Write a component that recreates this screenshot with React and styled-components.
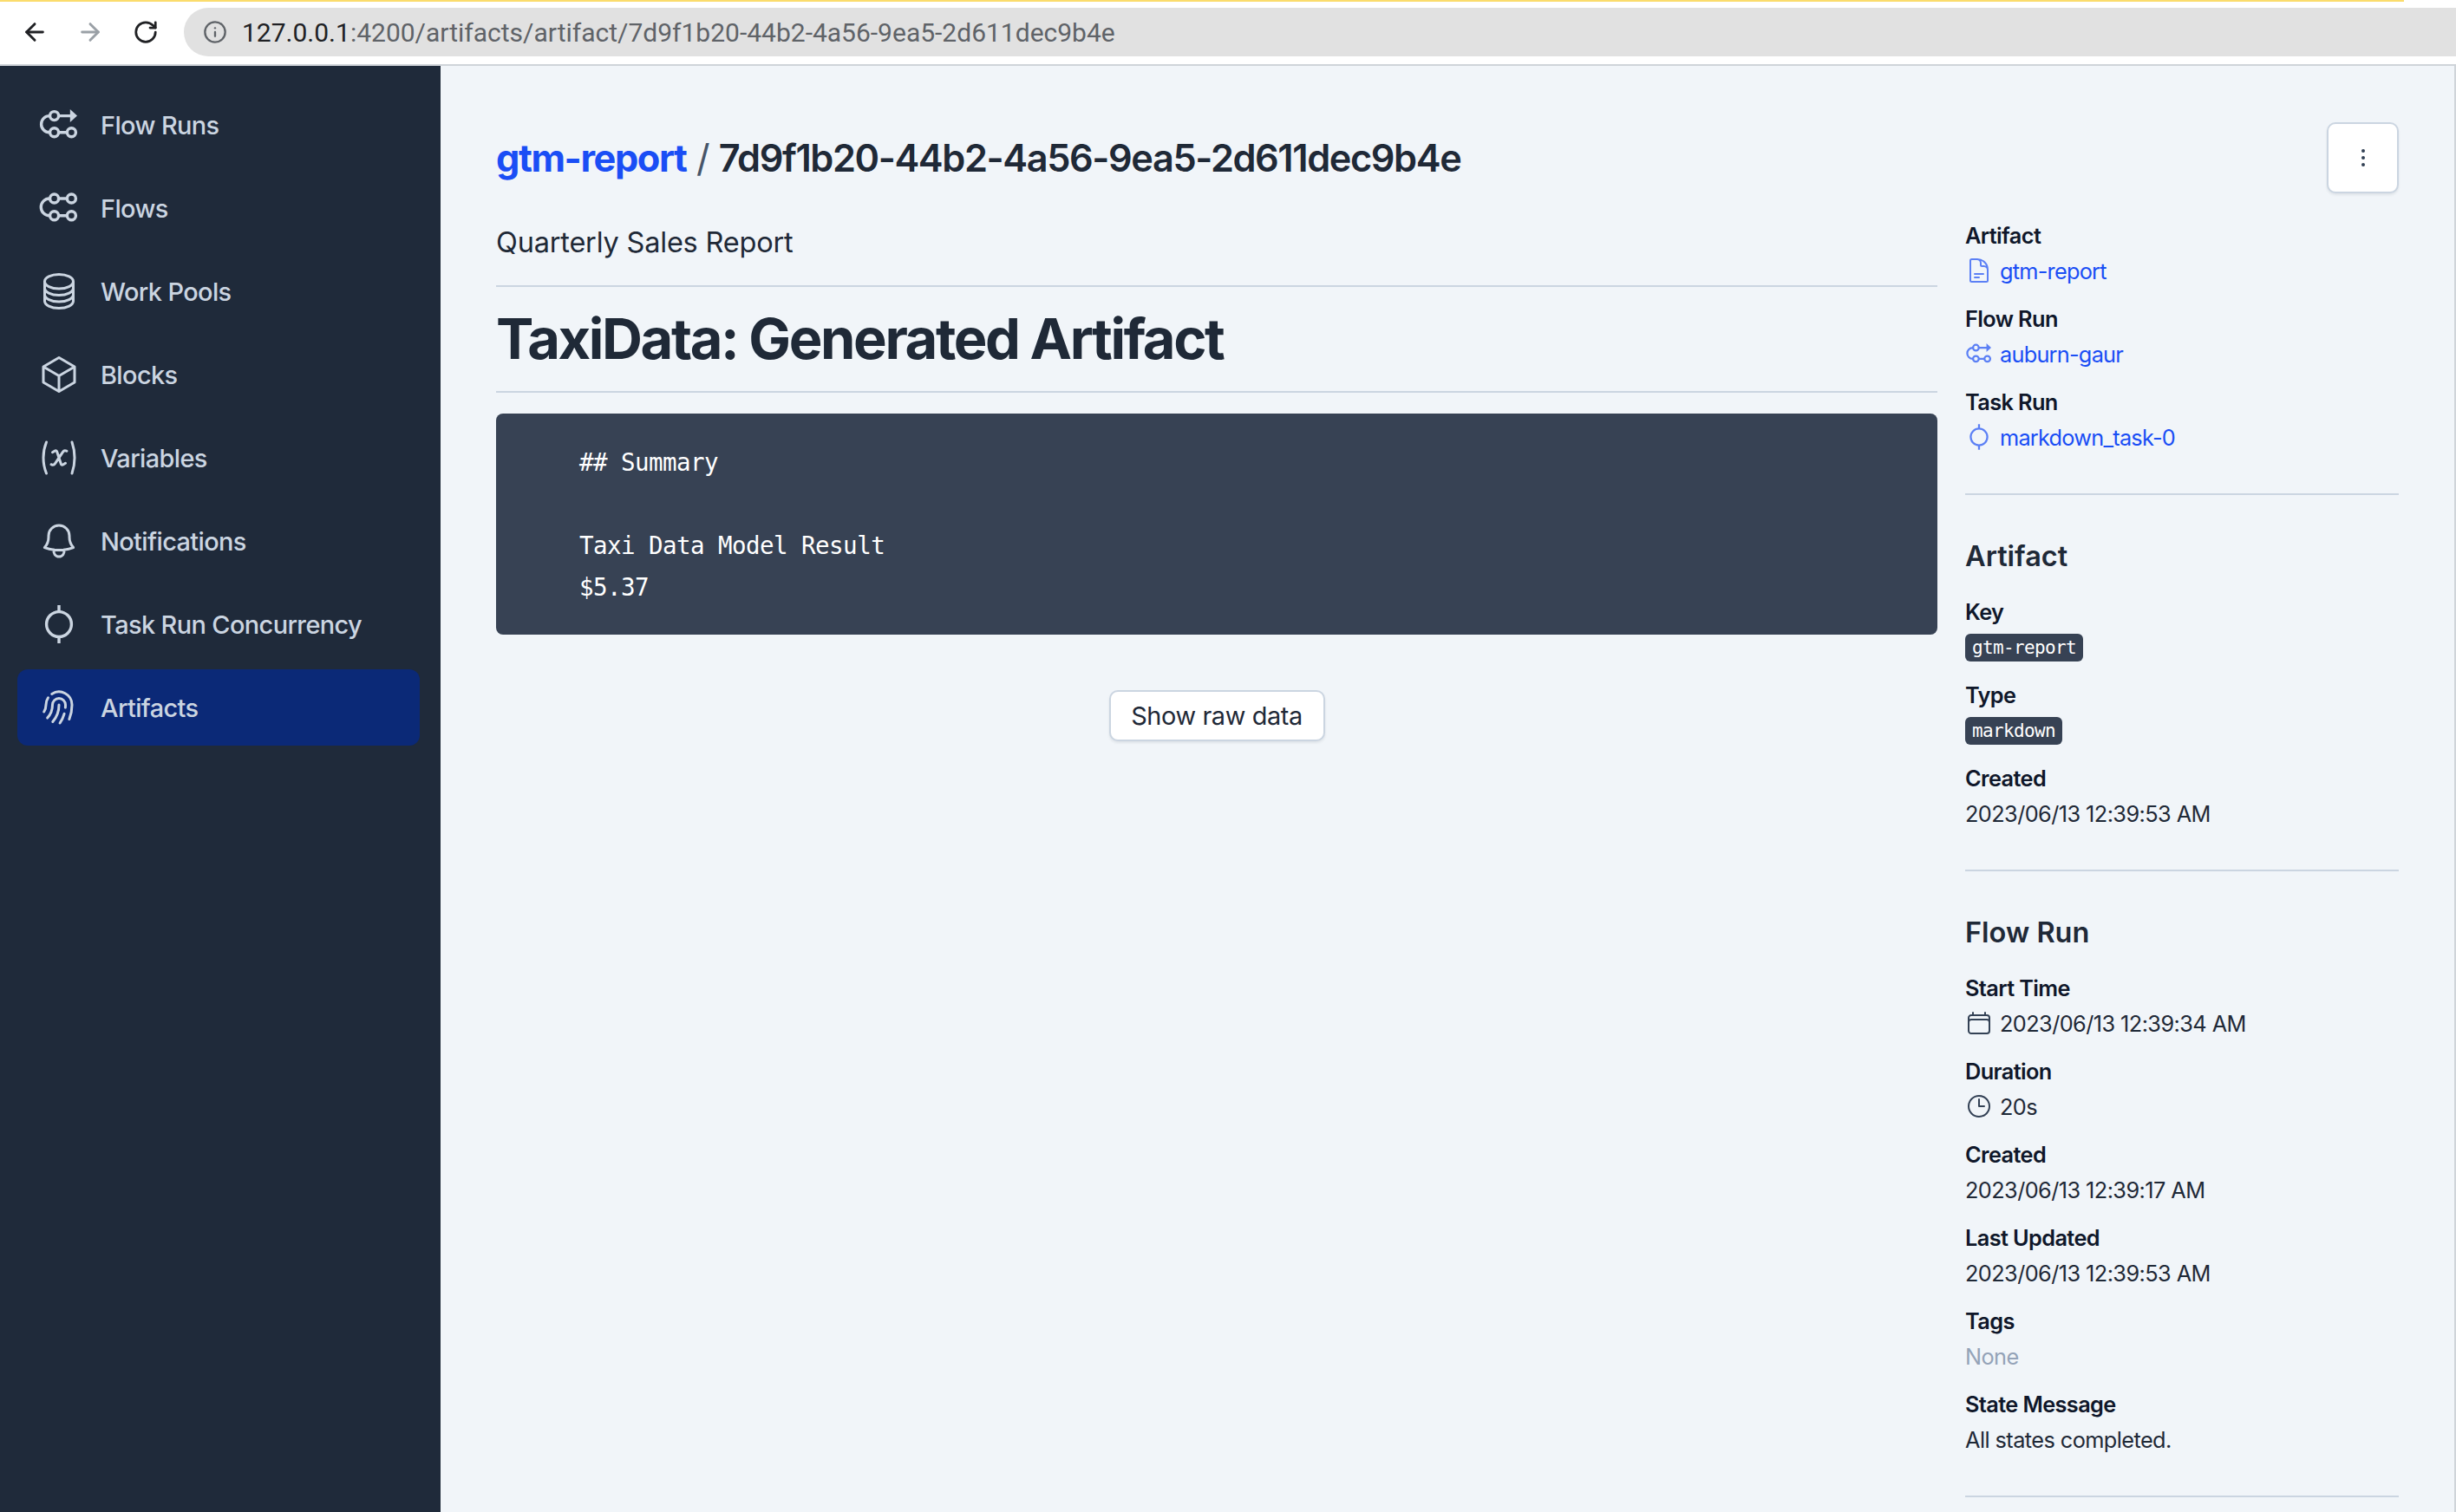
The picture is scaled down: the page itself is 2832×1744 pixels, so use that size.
import React from 'react';
import styled, { createGlobalStyle } from 'styled-components';
import { ArrowLeft, ArrowRight, RotateCw, Info } from 'lucide-react';
import {
  HiOutlineCircleStack,
  HiOutlineCube,
  HiOutlineVariable,
  HiOutlineBell,
  HiOutlineFingerPrint,
  HiOutlineDocumentText,
  HiOutlineCalendar,
  HiOutlineClock,
} from 'react-icons/hi2';

const GlobalStyle = createGlobalStyle`
  html, body {
    margin: 0;
    padding: 0;
    overflow: hidden;
    background: #f1f5f9;
    font-family: Inter, "Noto Sans", sans-serif;
  }
  * { box-sizing: border-box; }
`;

function FlowRunsIcon() {
  return (
    <svg viewBox="0 0 24 24" fill="none" stroke="currentColor" strokeWidth="1.7">
      <circle cx="9.3" cy="6.8" r="2.5" />
      <circle cx="9.3" cy="16.4" r="2.5" />
      <circle cx="19.2" cy="16.4" r="2.5" />
      <path d="M6.8 6.8H6.6a4.8 4.8 0 0 0 0 9.6h.2M11.8 16.4h4.9M11.8 6.8h7.5" />
      <path d="M18.4 3l4.1 3.8-4.1 3.7z" fill="currentColor" stroke="none" />
    </svg>
  );
}

function FlowsIcon() {
  return (
    <svg viewBox="0 0 24 24" fill="none" stroke="currentColor" strokeWidth="1.7">
      <circle cx="9.3" cy="6.5" r="2.5" />
      <circle cx="19.2" cy="6.5" r="2.5" />
      <circle cx="9.3" cy="16.4" r="2.5" />
      <circle cx="19.2" cy="16.4" r="2.5" />
      <path d="M6.8 6.5H6.6a4.95 4.95 0 0 0 0 9.9h.2M11.8 16.4h4.9M11.8 6.5h4.9" />
    </svg>
  );
}

function TaskRunIcon() {
  return (
    <svg viewBox="0 0 24 24" fill="none" stroke="currentColor" strokeWidth="1.7">
      <circle cx="12" cy="12" r="7.2" />
      <path d="M12 1v3.8M12 19.2V23" />
    </svg>
  );
}

const navItems = [
  { label: 'Flow Runs', icon: <FlowRunsIcon /> },
  { label: 'Flows', icon: <FlowsIcon /> },
  { label: 'Work Pools', icon: <HiOutlineCircleStack /> },
  { label: 'Blocks', icon: <HiOutlineCube /> },
  { label: 'Variables', icon: <HiOutlineVariable /> },
  { label: 'Notifications', icon: <HiOutlineBell /> },
  { label: 'Task Run Concurrency', icon: <TaskRunIcon /> },
  { label: 'Artifacts', icon: <HiOutlineFingerPrint />, active: true },
];

export default function App() {
  return (
    <Page>
      <GlobalStyle />
      <BrowserBar>
        <NavButton><ArrowLeft size={32} strokeWidth={2.2} /></NavButton>
        <NavButton $muted><ArrowRight size={32} strokeWidth={2.2} /></NavButton>
        <NavButton><RotateCw size={30} strokeWidth={2.2} /></NavButton>
        <AddressBar>
          <Info size={28} strokeWidth={2} />
          <Url><b>127.0.0.1</b>:4200/artifacts/artifact/7d9f1b20-44b2-4a56-9ea5-2d611dec9b4e</Url>
        </AddressBar>
      </BrowserBar>
      <Body>
        <Sidebar>
          {navItems.map((item) => (
            <NavItem key={item.label} $active={item.active}>
              <NavIcon>{item.icon}</NavIcon>
              {item.label}
            </NavItem>
          ))}
        </Sidebar>
        <Main>
          <Header>
            <Title>
              <TitleLink>gtm-report</TitleLink>
              <Slash>/</Slash>
              7d9f1b20-44b2-4a56-9ea5-2d611dec9b4e
            </Title>
            <MenuButton aria-label="menu">
              <Dot />
              <Dot />
              <Dot />
            </MenuButton>
          </Header>
          <Columns>
            <Content>
              <Description>Quarterly Sales Report</Description>
              <Heading>TaxiData: Generated Artifact</Heading>
              <CodeBlock>{`## Summary

Taxi Data Model Result
$5.37`}</CodeBlock>
              <ButtonRow>
                <RawButton>Show raw data</RawButton>
              </ButtonRow>
            </Content>
            <Aside>
              <Section>
                <Field>
                  <Label>Artifact</Label>
                  <LinkValue><SmallIcon $link><HiOutlineDocumentText /></SmallIcon>gtm-report</LinkValue>
                </Field>
                <Field>
                  <Label>Flow Run</Label>
                  <LinkValue><SmallIcon $link><FlowRunsIcon /></SmallIcon>auburn-gaur</LinkValue>
                </Field>
                <Field>
                  <Label>Task Run</Label>
                  <LinkValue><SmallIcon $link><TaskRunIcon /></SmallIcon>markdown_task-0</LinkValue>
                </Field>
              </Section>
              <Section>
                <SectionTitle>Artifact</SectionTitle>
                <Field>
                  <Label>Key</Label>
                  <Value><Tag>gtm-report</Tag></Value>
                </Field>
                <Field>
                  <Label>Type</Label>
                  <Value><Tag>markdown</Tag></Value>
                </Field>
                <Field>
                  <Label>Created</Label>
                  <Value>2023/06/13 12:39:53 AM</Value>
                </Field>
              </Section>
              <Section>
                <SectionTitle>Flow Run</SectionTitle>
                <Field>
                  <Label>Start Time</Label>
                  <Value><SmallIcon><HiOutlineCalendar /></SmallIcon>2023/06/13 12:39:34 AM</Value>
                </Field>
                <Field>
                  <Label>Duration</Label>
                  <Value><SmallIcon><HiOutlineClock /></SmallIcon>20s</Value>
                </Field>
                <Field>
                  <Label>Created</Label>
                  <Value>2023/06/13 12:39:17 AM</Value>
                </Field>
                <Field>
                  <Label>Last Updated</Label>
                  <Value>2023/06/13 12:39:53 AM</Value>
                </Field>
                <Field>
                  <Label>Tags</Label>
                  <Value $muted>None</Value>
                </Field>
                <Field>
                  <Label>State Message</Label>
                  <Value>All states completed.</Value>
                </Field>
              </Section>
            </Aside>
          </Columns>
        </Main>
      </Body>
    </Page>
  );
}

const Page = styled.div`
  width: 2832px;
  height: 1744px;
  display: flex;
  flex-direction: column;
  overflow: hidden;
`;

const BrowserBar = styled.div`
  position: relative;
  height: 76px;
  flex: none;
  display: flex;
  align-items: center;
  padding: 0 0 0 24px;
  background: #fff;
  border-bottom: 2px solid #cfd4d9;

  &::before {
    content: '';
    position: absolute;
    top: 0;
    left: 0;
    width: 2772px;
    height: 2px;
    background: #fbdc6c;
  }
`;

const NavButton = styled.div`
  width: 32px;
  height: 32px;
  margin-right: 32px;
  display: flex;
  align-items: center;
  justify-content: center;
  color: ${(props) => (props.$muted ? '#9aa0a6' : '#202124')};

  &:nth-child(3) {
    margin-right: 28px;
  }
`;

const AddressBar = styled.div`
  flex: 1;
  height: 56px;
  display: flex;
  align-items: center;
  gap: 17px;
  padding-left: 22px;
  background: #e1e1e1;
  border-radius: 28px 0 0 28px;
  color: #5f6368;
`;

const Url = styled.span`
  font-family: Roboto, sans-serif;
  font-size: 30px;
  color: #5f6368;

  b {
    font-weight: 400;
    color: #202124;
  }
`;

const Body = styled.div`
  flex: 1;
  display: flex;
  min-height: 0;
`;

const Sidebar = styled.nav`
  width: 508px;
  flex: none;
  display: flex;
  flex-direction: column;
  gap: 8px;
  padding: 24px 24px 0 20px;
  background: #1f2a3a;
`;

const NavItem = styled.div`
  height: 88px;
  display: flex;
  align-items: center;
  gap: 24px;
  padding: 0 24px;
  border-radius: 12px;
  font-size: 28.9px;
  font-weight: 500;
  letter-spacing: -0.6px;
  color: #cbd5e1;
  background: ${(props) => (props.$active ? '#0b2977' : 'transparent')};
`;

const NavIcon = styled.span`
  width: 48px;
  height: 48px;
  flex: none;
  display: flex;

  svg {
    width: 48px;
    height: 48px;
  }
`;

const Main = styled.main`
  flex: 1;
  min-width: 0;
  padding: 65px 64px 0 64px;
  background: #f1f5f9;
  border-right: 2px solid #cfd4d9;
`;

const Header = styled.header`
  height: 82px;
  display: flex;
  align-items: center;
  justify-content: space-between;
`;

const Title = styled.h1`
  margin: 0;
  font-size: 43.3px;
  font-weight: 600;
  letter-spacing: -1.4px;
  color: #1f2937;
`;

const TitleLink = styled.span`
  font-weight: 700;
  color: #1a4ef5;
`;

const Slash = styled.span`
  margin: 0 11.5px;
  font-weight: 400;
  color: #475569;
`;

const MenuButton = styled.button`
  width: 83px;
  height: 82px;
  display: flex;
  flex-direction: column;
  align-items: center;
  justify-content: center;
  gap: 4px;
  padding: 0;
  background: #fff;
  border: 2px solid #cbd5e1;
  border-radius: 10px;
  box-shadow: 0 2px 3px rgba(15, 23, 42, 0.08);
`;

const Dot = styled.span`
  width: 4px;
  height: 4px;
  border-radius: 50%;
  background: #334155;
`;

const Columns = styled.div`
  display: flex;
  gap: 32px;
  margin-top: 29px;
`;

const Content = styled.div`
  flex: 1;
  min-width: 0;
`;

const Description = styled.p`
  margin: 0;
  height: 79px;
  line-height: 56px;
  font-size: 32.5px;
  letter-spacing: -0.2px;
  color: #1f2937;
  border-bottom: 2px solid #cbd5e1;
`;

const Heading = styled.h2`
  margin: 0;
  height: 122px;
  line-height: 120px;
  font-size: 65px;
  font-weight: 700;
  letter-spacing: -2.4px;
  color: #1f2937;
  border-bottom: 2px solid #cbd5e1;
`;

const CodeBlock = styled.pre`
  margin: 24px 0 0;
  padding: 32px 96px 31px;
  background: #374254;
  border-radius: 8px;
  font-family: "DejaVu Sans Mono", "Liberation Mono", monospace;
  font-size: 27.5px;
  letter-spacing: -0.55px;
  line-height: 48px;
  color: #fff;
`;

const ButtonRow = styled.div`
  display: flex;
  justify-content: center;
  margin-top: 64px;
`;

const RawButton = styled.button`
  width: 249px;
  height: 59px;
  padding: 0;
  background: #fff;
  border: 2px solid #cbd5e1;
  border-radius: 10px;
  box-shadow: 0 2px 3px rgba(15, 23, 42, 0.08);
  font-family: Inter, sans-serif;
  font-size: 28.9px;
  letter-spacing: -0.4px;
  color: #1f2937;
`;

const Aside = styled.aside`
  width: 500px;
  flex: none;
`;

const Section = styled.section`
  padding-bottom: 29px;
  margin-bottom: 47px;
  border-bottom: 2px solid #cbd5e1;
`;

const SectionTitle = styled.h3`
  margin: 0 0 20px;
  line-height: 48px;
  font-size: 32.5px;
  font-weight: 600;
  color: #1f2937;
`;

const Field = styled.div`
  margin-bottom: 16px;
`;

const Label = styled.div`
  line-height: 40px;
  font-size: 25.3px;
  font-weight: 600;
  letter-spacing: -0.6px;
  color: #0f172a;
`;

const Value = styled.div`
  height: 40px;
  display: flex;
  align-items: center;
  gap: 8px;
  font-size: 25.3px;
  letter-spacing: -0.57px;
  color: ${(props) => (props.$muted ? '#94a3b8' : '#1f2937')};
`;

const LinkValue = styled(Value)`
  letter-spacing: -0.75px;
  color: #1a4ef5;
`;

const SmallIcon = styled.span`
  width: 32px;
  height: 32px;
  flex: none;
  display: flex;
  color: ${(props) => (props.$link ? '#5c80f5' : '#334155')};

  svg {
    width: 32px;
    height: 32px;
  }
`;

const Tag = styled.code`
  height: 32px;
  margin-top: 2px;
  display: inline-flex;
  align-items: center;
  padding: 0 8px;
  background: #374254;
  border-radius: 6px;
  font-family: "DejaVu Sans Mono", monospace;
  font-size: 21px;
  letter-spacing: -0.64px;
  color: #fff;
`;
